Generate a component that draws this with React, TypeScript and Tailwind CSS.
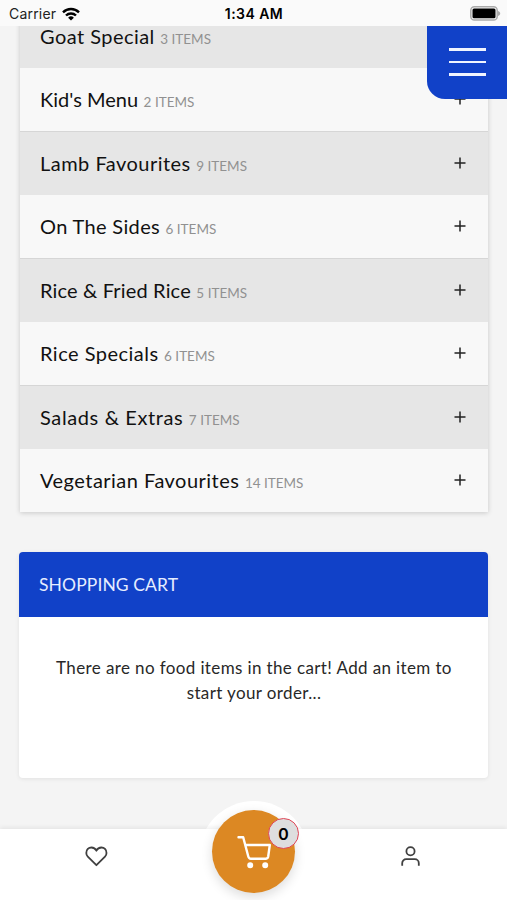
import clsx from 'clsx'

const categories = [
  { name: 'Goat Special', count: 3, tracking: 'tracking-[0.45px]' },
  { name: "Kid's Menu", count: 2, tracking: 'tracking-[0px]' },
  { name: 'Lamb Favourites', count: 9, tracking: 'tracking-[0.48px]' },
  { name: 'On The Sides', count: 6, tracking: 'tracking-[0.34px]' },
  { name: 'Rice & Fried Rice', count: 5, tracking: 'tracking-[0.16px]' },
  { name: 'Rice Specials', count: 6, tracking: 'tracking-[0.48px]' },
  { name: 'Salads & Extras', count: 7, tracking: 'tracking-[0.62px]' },
  { name: 'Vegetarian Favourites', count: 14, tracking: 'tracking-[0.48px]' },
]

function StatusBar() {
  return (
    <div className="relative z-20 flex h-[25.5px] items-center justify-between bg-[#fafafa] pt-[2px] pr-[6px] pl-[9px] font-['Inter',sans-serif] text-black">
      <div className="flex w-[120px] items-center gap-[6px]">
        <span className="text-[14px] tracking-[0.2px] text-[#222]">Carrier</span>
        <svg width="18" height="14" viewBox="0 0 18 14" fill="none" stroke="currentColor" strokeWidth="2.4">
          <path d="M1 5.3a11.4 11.4 0 0 1 16 0" />
          <path d="M4 8.5a7.1 7.1 0 0 1 10 0" />
          <path d="M9 13.6 6.1 10.7a4.1 4.1 0 0 1 5.8 0Z" fill="currentColor" stroke="none" />
        </svg>
      </div>
      <span className="pr-[2px] text-[14px] font-semibold tracking-[0.45px]">1:34 AM</span>
      <div className="flex w-[120px] justify-end">
        <svg width="31" height="15" viewBox="0 0 31 15">
          <rect x="0.8" y="0.8" width="26.4" height="13.2" rx="3.6" fill="#fafafa" stroke="#aaa" strokeWidth="1.5" />
          <rect x="2.5" y="2.5" width="23" height="9.8" rx="1.5" fill="#000" />
          <path d="M28 5v5c1.4-.5 2.2-1.4 2.2-2.5S29.4 5.5 28 5Z" fill="#aaa" />
        </svg>
      </div>
    </div>
  )
}

type CategoryRowProps = { name: string; count: number; tracking: string; shaded: boolean }

function CategoryRow({ name, count, tracking, shaded }: CategoryRowProps) {
  return (
    <div
      className={clsx(
        'flex h-[63.5px] items-center justify-between pr-[21.5px] pl-5',
        shaded ? 'border-t border-[#d6d6d6] bg-[#e6e6e6]' : 'bg-[#f8f8f8]',
      )}
    >
      <div className="whitespace-nowrap">
        <span className={clsx('text-[20px] text-[#111]', tracking)}>{name}</span>
        <span className="ml-[5.5px] text-[13.5px] text-[#919191]">{count} ITEMS</span>
      </div>
      <svg width="12" height="12" viewBox="0 0 12 12" stroke="#222" strokeWidth="1.5">
        <path d="M6 .5v11M.5 6h11" />
      </svg>
    </div>
  )
}

function MenuButton() {
  return (
    <button className="absolute top-[25px] right-0 z-10 flex h-[74px] w-[80px] flex-col items-center justify-center gap-[10px] rounded-bl-[18px] bg-[#1141c8]">
      <span className="h-[2.5px] w-[37px] bg-[#f0f4ff]" />
      <span className="h-[2.5px] w-[37px] bg-[#f0f4ff]" />
      <span className="h-[2.5px] w-[37px] bg-[#f0f4ff]" />
    </button>
  )
}

function ShoppingCart() {
  return (
    <section className="mt-[39.5px] h-[226px] overflow-hidden rounded-[4px] bg-white shadow-[0_1px_4px_rgba(0,0,0,0.08)]">
      <h2 className="flex h-[65px] items-center bg-[#1141c8] pt-[2px] pl-5 text-[17.5px] tracking-[0.1px] text-[#e6edff]">
        SHOPPING CART
      </h2>
      <p className="pt-[38px] pl-px text-center text-[17px] leading-[25.5px] tracking-[0.38px] text-[#282828]">
        There are no food items in the cart! Add an item to
        <br />
        start your order...
      </p>
    </section>
  )
}

function BottomNav() {
  return (
    <nav className="relative flex h-[71px] justify-between bg-white px-[84px] pt-[15px] shadow-[0_-2px_4px_rgba(0,0,0,0.06)]">
      <svg width="24" height="24" viewBox="0 0 24 24" fill="none" stroke="#404040" strokeWidth="1.8" strokeLinejoin="round">
        <path d="M12.4 21.2 3.8 12.6A5.3 5.3 0 0 1 2.3 8.9C2.3 5.6 4.6 3.5 7.4 3.5c2.3 0 3.9 1 5 3.2 1.1-2.2 2.7-3.2 5-3.2 2.8 0 5.1 2.1 5.1 5.4a5.3 5.3 0 0 1-1.5 3.7Z" />
      </svg>
      <svg width="24" height="24" viewBox="0 0 24 24" fill="none" stroke="#404040" strokeWidth="1.8">
        <circle cx="11.5" cy="7.2" r="4.1" />
        <path d="M3.2 21.8v-2.6a4 4 0 0 1 4-4h8.6a4 4 0 0 1 4 4v2.6" />
      </svg>
      <div className="absolute top-[-28px] left-[199px] -z-10 size-[110px] rounded-full bg-white" />
      <button className="absolute top-[-19px] left-[212px] flex size-[83px] items-center justify-center rounded-full bg-[#dc8823] shadow-[0_4px_12px_rgba(0,0,0,0.14)]">
        <svg width="34" height="34" viewBox="0 0 34 34" fill="none" stroke="#fff" strokeWidth="2.4" strokeLinecap="round" strokeLinejoin="round">
          <path d="M1.5 2.3h4.7l5.1 19.2c.4 1.5 1.1 2.2 2.5 2.2h14.8c1.5 0 2.3-.7 2.6-2.2L32.8 10H8.3" />
          <circle cx="13.2" cy="30.3" r="1.8" fill="#fff" />
          <circle cx="28.2" cy="30.3" r="1.8" fill="#fff" />
        </svg>
        <span className="absolute top-[8px] right-[-4px] flex size-[31px] items-center justify-center rounded-full border-[1.5px] border-[#e04858] bg-[#dedede] text-[17px] font-bold text-black">
          0
        </span>
      </button>
    </nav>
  )
}

export default function App() {
  return (
    <div className="relative flex h-[900px] w-[507px] flex-col overflow-hidden bg-[#f4f4f4] font-['Lato',sans-serif]">
      <StatusBar />
      <MenuButton />
      <main className="min-h-0 flex-1 px-[19px]">
        <div className="-mt-[21.5px] mr-[0.5px] ml-px bg-white shadow-[0_1px_5px_rgba(0,0,0,0.18)]">
          {categories.map((c, i) => (
            <CategoryRow key={c.name} {...c} shaded={i % 2 === 0} />
          ))}
        </div>
        <ShoppingCart />
      </main>
      <div className="relative z-10">
        <BottomNav />
      </div>
    </div>
  )
}
